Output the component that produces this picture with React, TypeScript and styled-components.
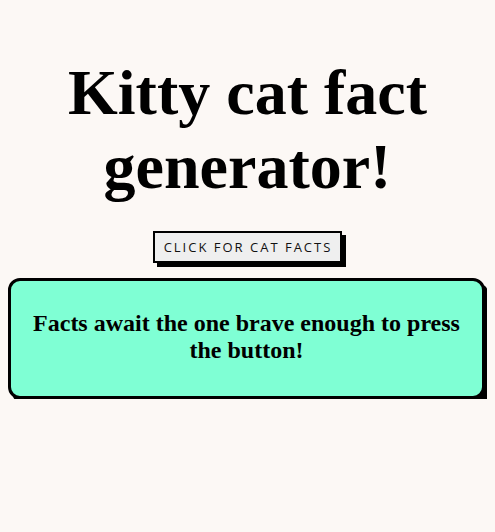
import * as React from 'react'
import styled, {createGlobalStyle} from 'styled-components'

const GlobalStyle = createGlobalStyle`
    body {
        margin: 8px;
        background-color: #fcf8f5;
        font-family: "Liberation Serif", "Times New Roman", serif;
        color: #000;
    }
`

const Page = styled.div`
    display: flex;
    flex-direction: column;
    align-items: center;
    text-align: center;
`

const Title = styled.h1`
    font-size: 64px;
    font-weight: bold;
    line-height: normal;
    margin: 48px 0 27px;
`

const FactButton = styled.button`
    font-family: "Open Sans", "DejaVu Sans", sans-serif;
    font-size: 13px;
    letter-spacing: 2px;
    text-transform: uppercase;
    color: #111;
    background-color: #efefef;
    border: 2px solid #000;
    padding: 5px 8px 5px 9px;
    box-shadow: 4px 4px 0 #000;
    cursor: pointer;
    margin-bottom: 15px;
`

const FactBox = styled.div`
    align-self: stretch;
    margin-right: 2px;
    background-color: #7fffd4;
    border: 3px solid #000;
    border-radius: 12px;
    box-shadow: 4px 5px 0 #000;
    padding: 29px 20px 32px;
`

const FactText = styled.h2`
    margin: 0;
    font-size: 24px;
    font-weight: bold;
    line-height: normal;
`

const App = () => {
    const [fact, setFact] = React.useState('Facts await the one brave enough to press the button!')

    return (
        <Page>
            <GlobalStyle/>
            <Title>Kitty cat fact generator!</Title>
            <FactButton onClick={() => setFact(fact)}>Click for cat facts</FactButton>
            <FactBox>
                <FactText>{fact}</FactText>
            </FactBox>
        </Page>
    )
}

export default App
